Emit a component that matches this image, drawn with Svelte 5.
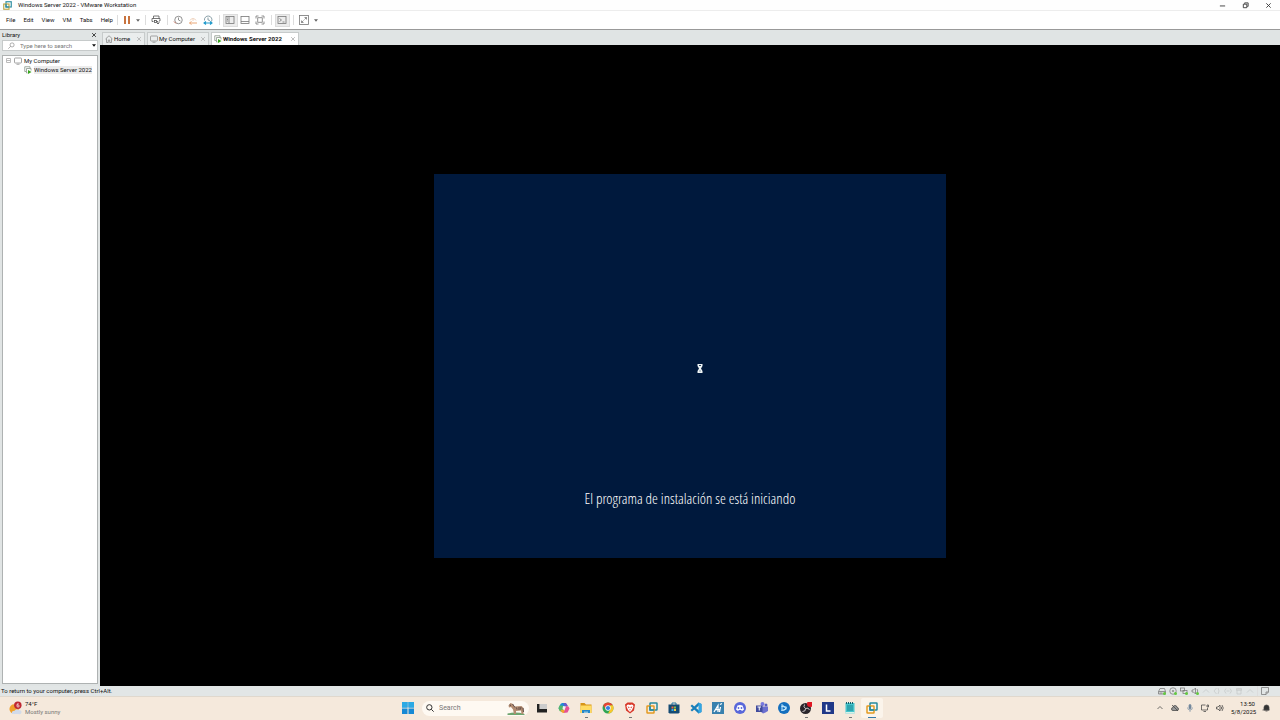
<script lang="ts">
  let search = $state('');
  let query = $state('');
  let activeTab = $state('Windows Server 2022');

  const menus = ['File', 'Edit', 'View', 'VM', 'Tabs', 'Help'];

  const tabs = [
    { title: 'Home', icon: 'home', size: 'small' },
    { title: 'My Computer', icon: 'monitor', size: 'medium' },
    { title: 'Windows Server 2022', icon: 'vm', size: 'large' }
  ];

  const tools = [
    { name: 'Send Ctrl+Alt+Del', icon: 'send', sep: true },
    { name: 'Take snapshot', icon: 'snapshot', sep: false },
    { name: 'Revert snapshot', icon: 'revert', sep: false },
    { name: 'Manage snapshots', icon: 'manage', sep: true },
    { name: 'Show library', icon: 'library', sep: false },
    { name: 'Show thumbnail bar', icon: 'thumbs', sep: false },
    { name: 'Full screen', icon: 'full', sep: true },
    { name: 'Console view', icon: 'console', sep: true }
  ];

  const pressed = ['library', 'console'];

  const devices = ['disk', 'cd', 'network', 'sound', 'off1', 'off2', 'off3', 'printer', 'off1'];

  const apps = [
    { name: 'Task View', icon: 'taskview' },
    { name: 'Copilot', icon: 'copilot' },
    { name: 'File Explorer', icon: 'explorer', running: true },
    { name: 'Chrome', icon: 'chrome' },
    { name: 'Brave', icon: 'brave', running: true },
    { name: 'VMware', icon: 'vmware' },
    { name: 'Microsoft Store', icon: 'store' },
    { name: 'Visual Studio Code', icon: 'code' },
    { name: 'Azure Data Studio', icon: 'azure' },
    { name: 'Discord', icon: 'discord' },
    { name: 'Teams', icon: 'teams' },
    { name: 'Battle.net', icon: 'battle' },
    { name: 'OBS Studio', icon: 'obs', running: true },
    { name: 'L', icon: 'letter' },
    { name: 'Notepad', icon: 'notepad', running: true },
    { name: 'VMware Workstation', icon: 'vmware', active: true }
  ];
</script>

{#snippet small(kind: string)}
  <svg class="small" viewBox="0 0 16 16" fill="none" stroke="#888" stroke-width="1.5" aria-hidden="true">
    {#if kind === 'home'}
      <path d="M1 8 8 1.500 15 8M3 7v8h3.500v-5h3v5H13V7" />
    {:else if kind === 'monitor'}
      <rect x="1" y="2" width="14" height="10" rx="1.500" />
      <path d="M5 14.500h6" />
    {:else if kind === 'vm'}
      <path d="M4 11H1.500V1.500H12V4" stroke="#849184" />
      <path d="M7 14H5V5h9v4" stroke="#849184" />
      <path d="M8 8v8l7-4z" fill="#38a51d" stroke="none" />
    {/if}
  </svg>
{/snippet}

{#snippet cross()}
  <svg class="cross" viewBox="0 0 8 8" fill="none" stroke="currentColor" aria-hidden="true">
    <path d="m1.500 1.500 5 5m0-5-5 5" />
  </svg>
{/snippet}

{#snippet caret()}
  <svg class="caret" viewBox="0 0 8 5" aria-hidden="true"><path d="M0 0h8L4 5z" fill="currentColor" /></svg>
{/snippet}

{#snippet tool(kind: string)}
  <svg class="tool-icon" viewBox="0 0 20 20" fill="none" stroke="#777" stroke-width="1.600" aria-hidden="true">
    {#if kind === 'send'}
      <path d="M5 7V2h11v5M5 13H2V7h16v5h-2" stroke="#555" />
      <rect x="7" y="11" width="4" height="4" stroke="#555" />
      <path d="M11 13h3v5m-3-3 3 3 3-3" stroke="#555" />
    {:else if kind === 'snapshot'}
      <circle cx="11" cy="10" r="7.500" />
      <path d="M11 5v5l4 2" />
      <path d="m2 13 4 4" stroke="#ce7461" stroke-width="2" />
    {:else if kind === 'revert'}
      <path d="M4 11a6.500 6.500 0 0 1 12 0M10 7v5" stroke="#ecccb4" />
      <path d="M3 16h15M3 16l4-3m-4 3 4 3" stroke="#eaa878" stroke-width="2" />
    {:else if kind === 'manage'}
      <path d="M3 11a7.500 7.500 0 1 1 14 2M10 5v5l4 1" stroke="#6d8893" />
      <path d="M3 16h14M6 13l-4 3 4 3m8-6 4 3-4 3" stroke="#209acb" stroke-width="2.200" />
    {:else if kind === 'library'}
      <rect x="2" y="3" width="16" height="14" />
      <path d="M8 3v14M4 6h2M4 9h2M4 12h2" />
    {:else if kind === 'thumbs'}
      <rect x="2" y="3" width="16" height="14" />
      <path d="M2 13h16" />
    {:else if kind === 'full'}
      <path d="M2 7V2h5m6 0h5v5m0 6v5h-5m-6 0H2v-5" />
      <rect x="5.500" y="5.500" width="9" height="9" />
    {:else if kind === 'console'}
      <rect x="2" y="3" width="16" height="14" />
      <path d="m5 7 4 3-4 3m6 1h4" />
    {:else if kind === 'stretch'}
      <rect x="1" y="1" width="18" height="18" />
      <path d="M11 9l4-4m-4 0h4v4M9 11l-4 4m0-4v4h4" />
    {/if}
  </svg>
{/snippet}

{#snippet device(kind: string)}
  <svg
    class="device"
    class:off={kind.startsWith('off') || kind === 'printer'}
    viewBox="0 0 16 16"
    fill="none"
    stroke="#777"
    stroke-width="1.500"
    aria-hidden="true"
  >
    {#if kind === 'disk'}
      <path d="m1 9 3-6h9l2 6v5H1zM1 9h14M3 12h6" />
    {:else if kind === 'cd'}
      <circle cx="8" cy="8" r="6.500" />
      <circle cx="8" cy="8" r="1.500" />
    {:else if kind === 'network'}
      <rect x="1" y="2" width="8" height="6" />
      <rect x="6" y="7" width="8" height="6" />
    {:else if kind === 'sound'}
      <path d="M2 6h3l4-4v12l-4-4H2zM12 4q3 4 0 8" />
    {:else if kind === 'off1'}
      <path d="m2 11 6-6 6 6" />
    {:else if kind === 'off2'}
      <path d="m7 2-5 6 5 6m3-12q4 6 0 12" />
    {:else if kind === 'off3'}
      <path d="m4 3-3 5 3 5m8-10 3 5-3 5M5 8h6" />
    {:else if kind === 'printer'}
      <path d="M2 6h12M4 6v8h8V6M3 3h10v3H3z" />
    {:else if kind === 'note'}
      <path d="M1 1h14v9l-5 5H1zM15 10h-5v5" />
    {/if}
    {#if ['disk', 'cd', 'network', 'sound'].includes(kind)}
      <circle cx="13" cy="13" r="3" fill="#63c940" stroke="none" />
    {/if}
  </svg>
{/snippet}

{#snippet app(kind: string)}
  <svg class="app-icon" viewBox="0 0 24 24" aria-hidden="true">
    {#if kind === 'start'}
      <path d="M0 0h11v11H0zM13 0h11v11H13zM0 13h11v11H0zM13 13h11v11H13z" fill="#1689d5" />
      <path d="M0 0h11v11H0zM13 0h11v11H13z" fill="#2ca9e4" />
    {:else if kind === 'taskview'}
      <path d="M2 4h5v10h15v7H2z" fill="#222" />
      <path d="M8 4h14v10H8z" fill="#ccc" />
    {:else if kind === 'copilot'}
      <path d="M8 2h7l4 7h-6l-3 7H4L1 13 5 4z" fill="#208bd8" />
      <path d="M3 7h6l2 5-3 8-5-2-2-6z" fill="#55b66a" />
      <path d="M11 2h5l4 6h-7z" fill="#6b58c8" />
      <path d="m16 8 5 1 2 4-4 8-8 1-4-3 6-2z" fill="#e65095" />
      <path d="m8 15 5 1-1 6-4-1-3-4z" fill="#f2a52b" />
      <path d="m10 8 5 1-2 6-4-1z" fill="#f4edf0" />
    {:else if kind === 'explorer'}
      <path d="M1 2h8l3 3h11v17H1z" fill="#d79518" />
      <path d="M1 7h22v15H1z" fill="#ffdb63" />
      <path d="M4 16h16v6H4z" fill="#2587ca" />
      <path d="M8 19h8v3H8z" fill="#8bc3df" />
    {:else if kind === 'chrome'}
      <circle cx="12" cy="12" r="11" fill="#2fa553" />
      <path d="M2.500 6.500a11 11 0 0 1 19 0L22 7H12L7 14z" fill="#e64334" />
      <path d="M21.500 6.500A11 11 0 0 1 12 23l5-9-2-7z" fill="#f9c82b" />
      <circle cx="12" cy="12" r="5.500" fill="#fff" />
      <circle cx="12" cy="12" r="4.200" fill="#357ee3" />
    {:else if kind === 'brave'}
      <path d="m7 1-5 4 2 12 8 6 8-6 2-12-5-4z" fill="#d83728" />
      <path d="m6 6 3-1 3 1 3-1 3 1 1 3-3 7-4 4-4-4-3-7z" fill="#fff" />
      <path d="m7 9 4 1-1 3zM17 9l-4 1 1 3zM10 15h4l-2 2z" fill="#d83728" />
    {:else if kind === 'vmware'}
      <rect x="8" y="2" width="14" height="14" rx="1" fill="none" stroke="#278a9e" stroke-width="3" />
      <rect x="2" y="8" width="14" height="14" rx="1" fill="none" stroke="#e39a22" stroke-width="3" />
      <path d="M8 8v8h8" fill="none" stroke="#278a9e" stroke-width="3" />
    {:else if kind === 'store'}
      <path d="M8 6V2h8v4" fill="none" stroke="#2478a5" stroke-width="2" />
      <path d="M1 5h22v16l-2 2H3l-2-2z" fill="#154b73" />
      <path d="M7 9h4v4H7z" fill="#ec6742" />
      <path d="M12 9h4v4h-4z" fill="#81bb47" />
      <path d="M7 14h4v4H7z" fill="#35a9e8" />
      <path d="M12 14h4v4h-4z" fill="#f6c83f" />
    {:else if kind === 'code'}
      <path d="m17 1 6 3v16l-6 3L1 8l3-3 14 12V7L4 19l-3-3z" fill="#187eb9" />
      <path d="m17 1 6 3v16l-6 3z" fill="#32a7e5" />
    {:else if kind === 'azure'}
      <path d="M0 0h24v24H0z" fill="#3981ae" />
      <path d="M4 20 12 7v13m-6-5h9m1-10 4-2m-5 17 2-10" fill="none" stroke="#fff" stroke-width="2.500" />
    {:else if kind === 'discord'}
      <circle cx="12" cy="12" r="12" fill="#5967da" />
      <path d="M7 7q5-2 10 0l3 8-4 3-2-2h-4l-2 2-4-3z" fill="#fff" />
      <circle cx="9" cy="12" r="1.800" fill="#5967da" />
      <circle cx="15" cy="12" r="1.800" fill="#5967da" />
    {:else if kind === 'teams'}
      <circle cx="13" cy="4" r="4" fill="#7879df" />
      <circle cx="20" cy="6" r="3" fill="#5960bc" />
      <path d="M8 9h16v9l-5 3-5 2-5-4z" fill="#6c70cf" />
      <path d="M0 7h13v13H0z" fill="#414b9d" />
      <path d="M3 10h7M6.500 10v7" stroke="#fff" stroke-width="2" />
    {:else if kind === 'battle'}
      <circle cx="12" cy="12" r="12" fill="#146fbe" />
      <path d="M8 18V5l9 9-10 3M7 9l10 1-6 8" fill="none" stroke="#c9edff" stroke-width="2" />
    {:else if kind === 'obs'}
      <circle cx="11" cy="13" r="11" fill="#29252a" />
      <path d="M11 13q-5-3-2-8m2 8q6-3 8 3m-8-3q1 6-6 6" fill="none" stroke="#c9c5c9" stroke-width="2" />
      <circle cx="20" cy="4" r="6" fill="#df1724" />
    {:else if kind === 'letter'}
      <path d="M0 0h24v24H0z" fill="#203888" />
      <path d="M9 5v13h8" fill="none" stroke="#fff" stroke-width="3" />
    {:else if kind === 'notepad'}
      <path d="M3 2h18v21H3z" fill="#45c4cc" />
      <path d="M5 0v4m4-4v4m4-4v4m4-4v4" stroke="#17606d" stroke-width="2" />
      <path d="M6 8h12M6 12h12M6 16h12" stroke="#1d8593" stroke-width="2" />
      <path d="M3 20h18v3H3z" fill="#d8f0e9" />
    {/if}
  </svg>
{/snippet}

<div class="desktop">
  <header class="titlebar">
    <svg class="logo" viewBox="0 0 24 24" fill="none" stroke-width="3" aria-hidden="true">
      <rect x="8" y="2" width="14" height="14" stroke="#278a9e" />
      <rect x="2" y="8" width="14" height="14" stroke="#bba441" />
      <path d="M8 8v8h8" stroke="#278a9e" />
    </svg>
    <h1>Windows Server 2022 - VMware Workstation</h1>
    <div class="window-buttons">
      <button aria-label="Minimize"><svg viewBox="0 0 8 8"><path d="M1 4.500h6" /></svg></button>
      <button aria-label="Restore"><svg viewBox="0 0 8 8"><path d="M1.500 2.500h4v4h-4zM3 2V1h4v4H6" /></svg></button>
      <button aria-label="Close"><svg viewBox="0 0 8 8"><path d="m1.500 1.500 5 5m0-5-5 5" /></svg></button>
    </div>
  </header>

  <div class="menubar">
    <nav>
      {#each menus as menu}
        <button>{menu}</button>
      {/each}
    </nav>
    <span class="sep"></span>
    <button class="pause" aria-label="Suspend"><span></span><span></span></button>
    <button class="drop" aria-label="Power options">{@render caret()}</button>
    <span class="sep"></span>
    {#each tools as item}
      <button class="tool" class:pressed={pressed.includes(item.icon)} aria-label={item.name}>
        {@render tool(item.icon)}
      </button>
      {#if item.sep}
        <span class="sep"></span>
      {/if}
    {/each}
    <button class="tool" aria-label="Stretch guest">{@render tool('stretch')}</button>
    <button class="drop" aria-label="Stretch options">{@render caret()}</button>
  </div>

  <div class="workspace">
    <aside>
      <div class="library-title">
        <h2>Library</h2>
        <button aria-label="Close library">{@render cross()}</button>
      </div>
      <label class="filter">
        <svg viewBox="0 0 12 12" fill="none" stroke="#777" aria-hidden="true">
          <circle cx="7" cy="5" r="3.500" /><path d="m4.500 7.500-4 4" />
        </svg>
        <input type="text" placeholder="Type here to search" aria-label="Search library" bind:value={search} />
        {@render caret()}
      </label>
      <div class="tree">
        <button class="node">
          <svg class="toggle" viewBox="0 0 5 5" aria-hidden="true">
            <path d="M.5.5h4v4h-4zM1 2.500h3" fill="none" stroke="#bbb" />
          </svg>
          {@render small('monitor')}
          <span>My Computer</span>
        </button>
        <button class="node child">
          {@render small('vm')}
          <span>Windows Server 2022</span>
        </button>
      </div>
    </aside>

    <main>
      <div class="tabs">
        {#each tabs as tab}
          <div class="tab {tab.size}" class:active={activeTab === tab.title}>
            <button class="tab-title" onclick={() => (activeTab = tab.title)}>
              {@render small(tab.icon)}
              <span>{tab.title}</span>
            </button>
            <button class="tab-close" aria-label="Close {tab.title}">{@render cross()}</button>
          </div>
        {/each}
      </div>
      <div class="console">
        <section class="guest">
          <svg class="hourglass" viewBox="0 0 12 20" aria-hidden="true">
            <path d="M1 1h10v4l-3 5 3 5v4H1v-4l3-5-3-5z" fill="#eef3f5" />
            <path d="M4 4h4M5 15h2" stroke="#274461" stroke-width="2" />
          </svg>
          <p>El programa de instalación se está iniciando</p>
        </section>
      </div>
    </main>
  </div>

  <div class="status">
    <span>To return to your computer, press Ctrl+Alt.</span>
    <div class="devices">
      {#each devices as item}
        {@render device(item)}
      {/each}
      <span class="sep"></span>
      {@render device('note')}
    </div>
  </div>

  <footer class="taskbar">
    <button class="weather">
      <svg viewBox="0 0 28 30" aria-hidden="true">
        <circle cx="11" cy="16" r="10" fill="#f0a12b" />
        <path d="M6 27q-1-7 6-7 3-6 9-2 6 0 6 5t-7 4z" fill="#d2dbea" />
        <circle cx="19" cy="8" r="8" fill="#bf2832" />
        <path d="M21 5q-4-2-4 4 0 3 2.500 3t2.500-2.500-4.500-2" fill="none" stroke="#fff" stroke-width="1.500" />
      </svg>
      <span class="lines"><span>74°F</span><span class="dim">Mostly sunny</span></span>
    </button>

    <div class="apps">
      <button class="app" aria-label="Start">{@render app('start')}</button>
      <label class="search">
        <svg class="lens" viewBox="0 0 12 12" fill="none" stroke="#333" stroke-width="1.500" aria-hidden="true">
          <circle cx="5" cy="5" r="4" /><path d="m8 8 3.500 3.500" />
        </svg>
        <input type="text" placeholder="Search" aria-label="Search" bind:value={query} />
        <svg class="zebra" viewBox="0 0 36 26" aria-hidden="true">
          <path d="M1 23q17-4 34 1v2H1z" fill="#6ea570" />
          <path d="m3 7 4-5 5 2 3 5 14-1 4 4v12h-4l-1-7-10 1v6h-4l-2-9-4-5-4 1z" fill="#b28b70" />
          <path d="m11 4 5 7m3 0 1 4m4-5v6m4-6-1 5m5-3 1 8M6 5l1 3" stroke="#604d48" stroke-width="2" />
        </svg>
      </label>
      {#each apps as item}
        <button class="app" class:current={item.active} aria-label={item.name}>
          {@render app(item.icon)}
          {#if item.running || item.active}
            <span class="mark"></span>
          {/if}
        </button>
      {/each}
    </div>

    <div class="tray">
      <svg viewBox="0 0 16 16" aria-hidden="true"><path d="m3 10 5-5 5 5" /></svg>
      <svg viewBox="0 0 16 16" aria-hidden="true">
        <path d="M4 13a3 3 0 0 1 0-6 4 4 0 0 1 8 0 3 3 0 0 1 0 6z" fill="#999" /><path d="m2 2 12 12" />
      </svg>
      <svg viewBox="0 0 16 16" aria-hidden="true">
        <rect x="6" y="1" width="4" height="9" rx="2" fill="#70869c" stroke="#70869c" />
        <path d="M3 7q0 5 5 5t5-5M8 12v4" stroke="#8798a8" />
      </svg>
      <svg viewBox="0 0 16 16" aria-hidden="true">
        <path d="M9 2H1v10h12V8M5 15h5M12 2h3v4h-3z" />
      </svg>
      <svg viewBox="0 0 16 16" aria-hidden="true">
        <path d="M1 6h3l4-4v12l-4-4H1zM10 5q3 3 0 6m2-9q5 6 0 12" />
      </svg>
      <span class="clock"><time>13:50</time><time>5/8/2025</time></span>
      <svg viewBox="0 0 16 16" aria-hidden="true">
        <path d="M4 12V7q0-5 5-5t5 5v5zM7 14h4" fill="#333" /><path d="M1 12h14" />
      </svg>
    </div>
  </footer>
</div>

<style>
  :global(body) {
    margin: 0;
  }

  .desktop {
    display: flex;
    flex-direction: column;
    min-height: 100vh;
    background: #fff;
    color: #111;
    font: 6px/8px Roboto, 'Open Sans', sans-serif;
  }

  button,
  input {
    margin: 0;
    padding: 0;
    border: 0;
    background: none;
    color: inherit;
    font: inherit;
  }

  button {
    display: flex;
    align-items: center;
    justify-content: center;
  }

  svg {
    flex: none;
    display: block;
  }

  h1,
  h2,
  p {
    margin: 0;
    font-size: inherit;
    font-weight: normal;
  }

  .titlebar {
    display: flex;
    align-items: center;
    gap: 6px;
    height: 10px;
    padding-left: 3px;
    border-bottom: 1px solid #ededed;
    background: #fefefe;
  }

  .logo {
    width: 9px;
    height: 9px;
  }

  .window-buttons {
    display: flex;
    margin-left: auto;
  }

  .window-buttons button {
    width: 23px;
    height: 10px;
  }

  .window-buttons svg {
    width: 7px;
    height: 7px;
    fill: none;
    stroke: #333;
  }

  .menubar {
    display: flex;
    align-items: center;
    height: 18px;
    padding-left: 6px;
  }

  nav {
    display: flex;
    gap: 8px;
    margin-right: 1px;
  }

  .sep {
    width: 1px;
    height: 10px;
    margin: 0 3px;
    background: #ddd;
  }

  .pause {
    gap: 2px;
    width: 13px;
  }

  .pause span {
    width: 2px;
    height: 8px;
    background: #c8733e;
  }

  .caret {
    width: 4px;
    height: 3px;
  }

  .drop {
    width: 8px;
    height: 12px;
    color: #666;
  }

  .tool {
    width: 15px;
    height: 13px;
  }

  .tool.pressed {
    background: #ececec;
    box-shadow: inset 0 0 0 1px #dcdcdc;
  }

  .tool-icon {
    width: 10px;
    height: 10px;
  }

  .workspace {
    display: grid;
    grid-template-columns: 100px 1fr;
    flex: 1;
    border-top: 1px solid #999;
    background: #e0e4e4;
  }

  aside {
    display: flex;
    flex-direction: column;
    padding: 0 2px 2px;
  }

  .library-title {
    display: flex;
    align-items: center;
    justify-content: space-between;
    height: 10px;
    padding-right: 1px;
  }

  .cross {
    width: 6px;
    height: 6px;
  }

  .filter {
    display: flex;
    align-items: center;
    gap: 5px;
    height: 9px;
    margin-bottom: 4px;
    padding: 0 1px 0 5px;
    border: 1px solid #c6caca;
    background: #fff;
  }

  .filter svg:first-child {
    width: 7px;
    height: 7px;
  }

  input {
    flex: 1;
    min-width: 0;
    outline: none;
  }

  input::placeholder {
    color: #777;
    opacity: 1;
  }

  .tree {
    flex: 1;
    padding: 0 3px;
    border: 1px solid #aeb2b2;
    background: #fff;
  }

  .node {
    gap: 2px;
    height: 9px;
  }

  .toggle {
    width: 5px;
    height: 5px;
    margin-right: 1px;
  }

  .child {
    padding-left: 18px;
    white-space: nowrap;
  }

  .child span {
    background: #ececec;
  }

  .small {
    width: 8px;
    height: 8px;
  }

  main {
    display: flex;
    flex-direction: column;
    min-width: 0;
  }

  .tabs {
    display: flex;
    align-items: flex-end;
    gap: 2px;
    height: 15px;
    padding: 0 2px;
  }

  .tab {
    display: flex;
    align-items: center;
    justify-content: space-between;
    box-sizing: border-box;
    height: 13px;
    padding: 0 2px;
    border: 1px solid #c7cbcb;
    border-bottom: 0;
    background: #eaeded;
  }

  .tab.small {
    width: 43px;
  }

  .medium {
    width: 62px;
  }

  .large {
    width: 88px;
  }

  .tab.active {
    background: #fff;
    font-weight: bold;
  }

  .tab-title {
    gap: 1px;
    white-space: nowrap;
  }

  .tab-close {
    color: #aaa;
  }

  .console {
    display: flex;
    align-items: center;
    justify-content: center;
    flex: 1;
    background: #000;
  }

  .guest {
    display: grid;
    grid-template-rows: 1fr 69px;
    justify-items: center;
    align-items: end;
    width: 40vw;
    aspect-ratio: 4 / 3;
    background: #00193d;
    color: #fff;
    font: 300 15px/18px 'Open Sans Condensed Light', 'Open Sans Condensed', 'Open Sans', sans-serif;
  }

  .hourglass {
    width: 6px;
    height: 11px;
    margin-bottom: 115px;
    margin-left: 19px;
  }

  .guest p {
    align-self: start;
  }

  .status {
    display: flex;
    align-items: center;
    justify-content: space-between;
    height: 10px;
    padding: 0 11px 0 1px;
    background: #e2e6e6;
  }

  .devices {
    display: flex;
    align-items: center;
    gap: 3px;
  }

  .devices .sep {
    margin: 0;
  }

  .device {
    width: 8px;
    height: 8px;
  }

  .device.off {
    opacity: 0.25;
  }

  .taskbar {
    display: grid;
    grid-template-columns: 1fr auto 1fr;
    align-items: center;
    height: 22px;
    padding-bottom: 1px;
    border-top: 1px solid #e0d8cd;
    background: #f5e9dc;
  }

  .weather {
    justify-self: start;
    gap: 3px;
    padding-left: 9px;
  }

  .weather svg {
    width: 13px;
    height: 15px;
  }

  .lines {
    display: flex;
    flex-direction: column;
    align-items: flex-start;
  }

  .dim {
    color: #777;
  }

  .apps {
    display: flex;
    align-items: center;
  }

  .app {
    flex-direction: column;
    position: relative;
    width: 22px;
    height: 20px;
    border-radius: 2px;
  }

  .app-icon {
    width: 12px;
    height: 12px;
  }

  .mark {
    position: absolute;
    bottom: 0;
    width: 3px;
    height: 1px;
    background: #777;
  }

  .current {
    background: #fbf4eb;
  }

  .current .mark {
    width: 8px;
    background: #3578a8;
  }

  .search {
    display: flex;
    align-items: center;
    gap: 5px;
    box-sizing: border-box;
    width: 107px;
    height: 15px;
    margin: 0 2px 0 3px;
    padding: 0 4px;
    border-radius: 8px;
    background: #fef9f2;
    font-size: 7px;
  }

  .lens {
    width: 8px;
    height: 8px;
  }

  .zebra {
    width: 18px;
    height: 13px;
  }

  .tray {
    display: flex;
    align-items: center;
    justify-self: end;
    gap: 7px;
    padding-right: 10px;
  }

  .tray svg {
    width: 8px;
    height: 8px;
    fill: none;
    stroke: #444;
    stroke-width: 1.5;
  }

  .clock {
    display: flex;
    flex-direction: column;
    width: 24px;
    text-align: right;
  }
</style>
